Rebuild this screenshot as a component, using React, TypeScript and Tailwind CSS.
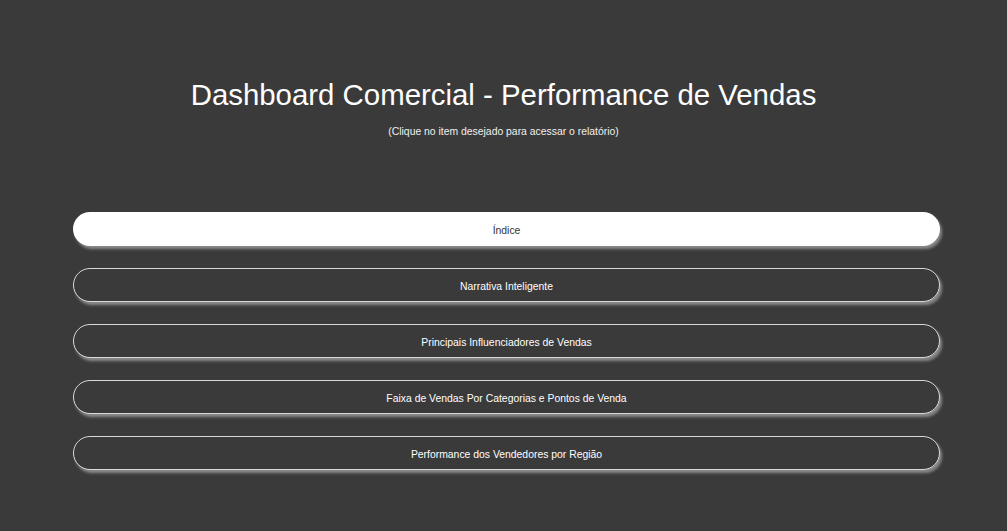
import React from 'react';

const items = [
  'Índice',
  'Narrativa Inteligente',
  'Principais Influenciadores de Vendas',
  'Faixa de Vendas Por Categorias e Pontos de Venda',
  'Performance dos Vendedores por Região',
];

export default function App() {
  return (
    <div
      className="w-[1007px] h-[531px] bg-[#3a3a3a] text-white overflow-hidden"
      style={{ fontFamily: '"Liberation Sans", Arial, sans-serif' }}
    >
      {/* Header */}
      <div className="pt-[78px] flex flex-col items-center">
        <h1 className="text-[29.4px] leading-[34px] text-white">
          Dashboard Comercial - Performance de Vendas
        </h1>
        <p className="mt-[13px] text-[10.4px] leading-[14px] text-[#f0f0f0]">
          (Clique no item desejado para acessar o relatório)
        </p>
      </div>

      {/* Report links */}
      <div className="mt-[73px] pl-[73px] flex flex-col gap-[22px]">
        {items.map((label, i) => (
          <button
            key={label}
            className={`h-[34px] w-[867px] rounded-full text-[10.4px] pt-[3px] flex items-center justify-center shadow-[2px_3px_3px_#8a8a8a] ${
              i === 0
                ? 'bg-white text-[#333]'
                : 'bg-[#3a3a3a] text-white border border-[#d8d8d8]'
            }`}
          >
            {label}
          </button>
        ))}
      </div>
    </div>
  );
}
